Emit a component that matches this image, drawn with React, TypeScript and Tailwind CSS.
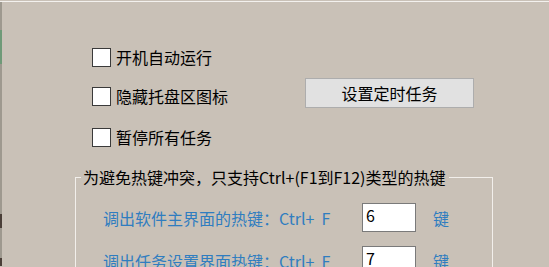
import React from "react";

const font = "font-['Noto_Sans_CJK_SC','Noto_Sans',sans-serif]";

function Check({ label, className = "" }: { label: string; className?: string }) {
  return (
    <label className={`flex h-[19px] items-center gap-[5px] ${className}`}>
      <input
        type="checkbox"
        className="h-[19px] w-[19px] shrink-0 appearance-none border border-[#3a3a3a] bg-white"
      />
      <span className="text-[16px] leading-[19px] text-black">{label}</span>
    </label>
  );
}

function HotkeyRow({ label, value, className = "" }: { label: string; value: string; className?: string }) {
  return (
    <div className={`flex h-[29px] items-center ${className}`}>
      <span className="w-[259px] whitespace-pre text-[16px] leading-[18px] text-[#2f7dc0]">
        {label}
        {"Ctrl+  F"}
      </span>
      <input
        readOnly
        value={value}
        className="h-[29px] w-[54px] border border-[#7a7a7a] bg-white px-[3px] pb-[6px] text-[16px] leading-[18px] text-black outline-none"
      />
      <span className="ml-[17px] text-[16px] leading-[18px] text-[#2f7dc0]">键</span>
    </div>
  );
}

export default function App() {
  return (
    <div className={`relative h-[267px] w-[549px] overflow-hidden bg-[#c9c1b7] ${font}`}>
      <div className="mt-[1px] h-px bg-[#f3f1ee]" />
      <div className="flex">
        <div className="flex w-[2px] flex-col">
          <div className="h-[28px] bg-[#9e998f]" />
          <div className="h-[34px] bg-[#6f9a78]" />
          <div className="h-[150px] bg-[#9e998f]" />
          <div className="h-[14px] bg-[#4a3f38]" />
          <div className="h-[30px] bg-[#9e998f]" />
          <div className="h-[8px] bg-[#4a3f38]" />
        </div>
        <div className="flex flex-col">
          <div className="flex">
            <div className="ml-[90px] flex w-[213px] flex-col">
              <Check label="开机自动运行" className="mt-[46px]" />
              <Check label="隐藏托盘区图标" className="mt-[20px]" />
              <Check label="暂停所有任务" className="mt-[22px]" />
            </div>
            <div>
              <button className="mt-[76px] h-[30px] w-[169px] border border-[#adadad] bg-[#e1e1e1] text-[16px] leading-[18px] text-black">
                设置定时任务
              </button>
            </div>
          </div>
          <fieldset className="ml-[73px] mt-[21px] h-[140px] w-[418px] border border-[#f2efeb] px-[5px]">
            <legend className="pl-[2px] pr-[3px] text-[16px] leading-[18px] text-black">
              为避免热键冲突，只支持Ctrl+(F1到F12)类型的热键
            </legend>
            <HotkeyRow label="调出软件主界面的热键：" value="6" className="ml-[22px] mt-[17px]" />
            <HotkeyRow label="调出任务设置界面热键：" value="7" className="ml-[22px] mt-[14px]" />
          </fieldset>
        </div>
      </div>
    </div>
  );
}
